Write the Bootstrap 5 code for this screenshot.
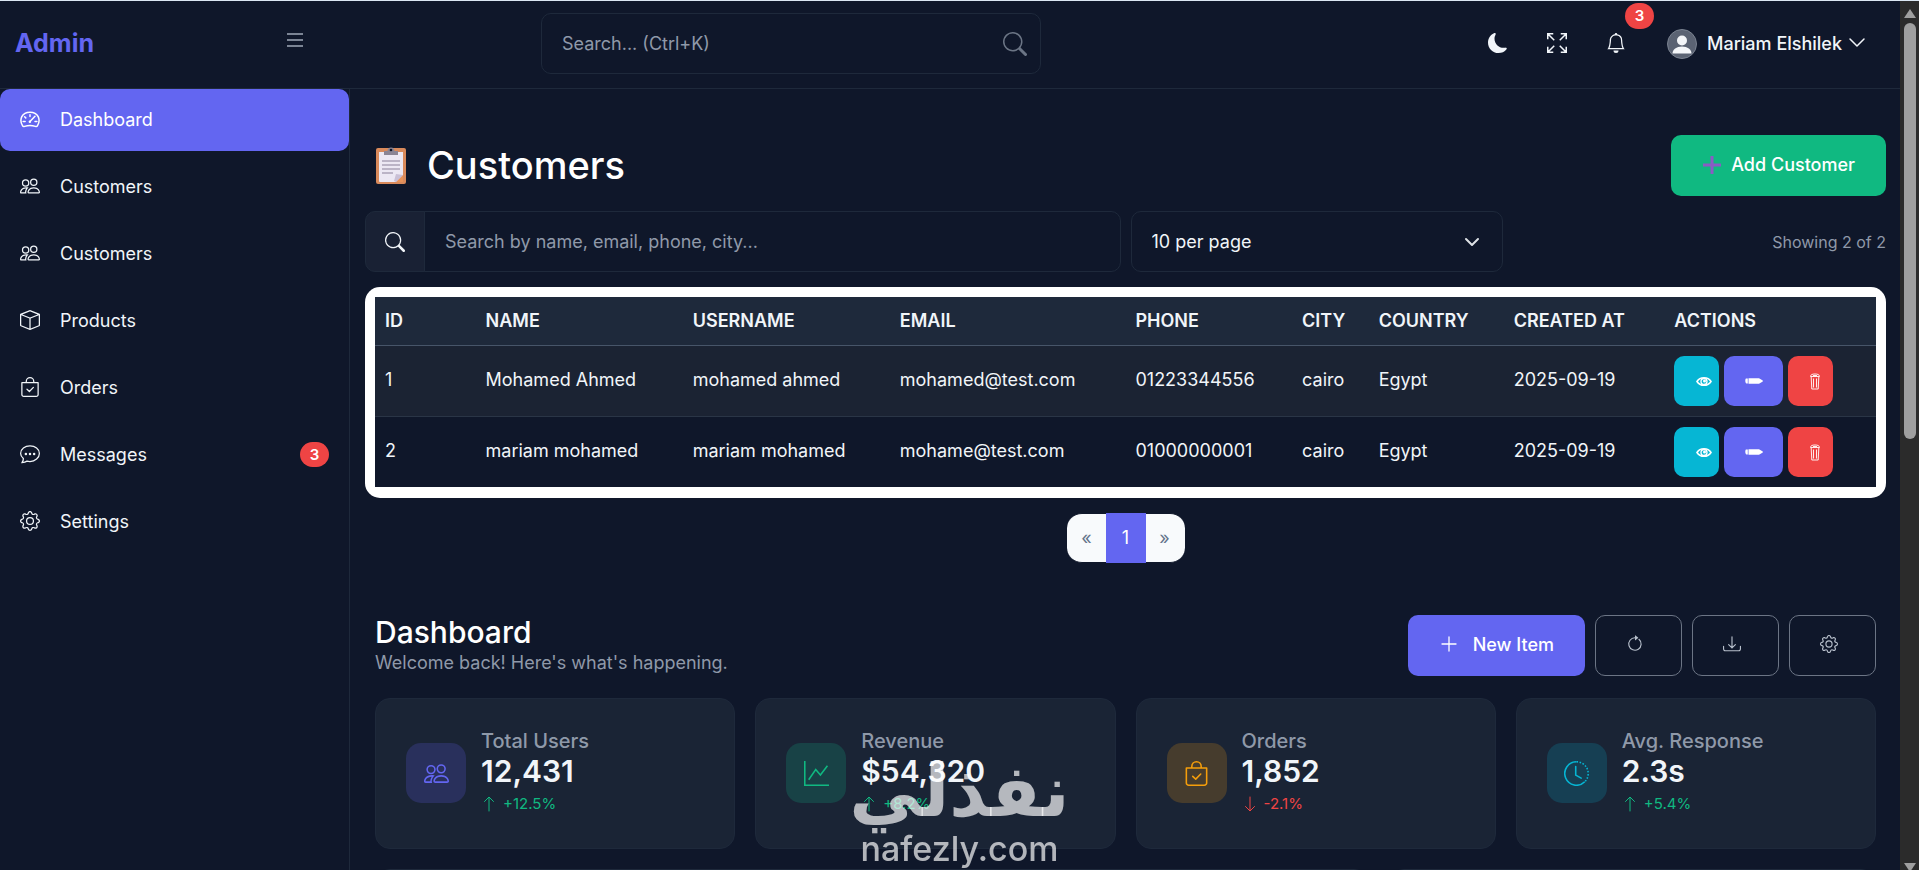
<!DOCTYPE html>
<html lang="en" data-bs-theme="dark">
<head>
<meta charset="utf-8">
<meta name="viewport" content="width=device-width, initial-scale=1">
<title>Admin</title>
<link href="https://cdn.jsdelivr.net/npm/bootstrap@5.3.0/dist/css/bootstrap.min.css" rel="stylesheet">
<style>
:root{--ink:#f1f5f9;--dim:#8f99a9;--base:#0f172a;--line:#1e293b;--indigo:#6366f1;--red:#ef4444;--green:#10b981;--cyan:#06b6d4;--amber:#f59e0b}
body{font-family:Inter,"Liberation Sans",sans-serif;font-size:18px;line-height:1.5;background:var(--base);color:var(--ink);height:100vh;overflow:hidden}
.shell{border-top:1px solid #dbe7f3;height:100vh}
.ico{width:20px;height:20px;fill:currentColor;flex:none}
.topbar{height:88px;border-bottom:1px solid var(--line);padding-bottom:2px}
.brand-zone{width:350px;padding:0 46px 0 15px}
.brand-name{font-size:25px;font-weight:700;color:var(--indigo);text-decoration:none}
.plain-btn{background:none;border:0;color:var(--ink);padding:0}
.tool-btn{width:59px;height:40px;padding-bottom:5px}
.topsearch{width:500px;margin-left:191px}
.form-control,.form-select,.input-group-text{background-color:var(--base);border:1px solid var(--line);border-radius:10px;color:var(--ink);font-size:18px;height:61px;padding:0 20px}
.form-control::placeholder{color:var(--dim);opacity:1}
.topsearch .ico{right:14px;width:24px;height:24px;color:#6b7585}
.pill{background:var(--red);border-radius:15px;font-size:15px;font-weight:600;line-height:26px;color:#fff;width:29px;text-align:center}
.pill-bell{top:-21px;left:39px}
.avatar{width:30px;height:30px}
.user-btn{font-weight:500;padding:0 33px 0 22px}
.user-name{margin:0 5px 0 10px}
.sidebar{width:350px;flex:none;border-right:1px solid var(--line)}
.sidebar .nav{gap:5px}
.sidebar .nav-link{height:62px;border-radius:10px;padding:0 20px 2px;color:var(--ink);gap:20px;display:flex;align-items:center}
.sidebar .nav-link.active{background:var(--indigo);color:#fff}
.sidebar .pill{line-height:25px}
.content-zone{padding:46px 14px 0 15px;min-width:0}
.page-title{font-size:38px;font-weight:500;line-height:1.2;gap:21px;padding-left:11px}
.page-title svg{width:30px;height:37px}
.btn-tall{height:61px;border-radius:10px;border:1px solid transparent;font-size:18px;font-weight:500;padding:0 30px 2px;color:#fff;display:flex;align-items:center}
.btn-add{background:var(--green);gap:9px}
.btn-new{background:var(--indigo);gap:14px}
.btn-line{width:87px;padding:0 8px 2px 0;justify-content:center;border-color:#6c7585;color:#b8c0cc;background:none}
.btn-line .ico{width:18px;height:18px}
.btn-row{gap:10px}
.filters{--bs-gutter-x:10px;margin-top:15px}
.input-group-text{background:#192134;width:60px;justify-content:center;padding:0}
.form-select{background-image:url("data:image/svg+xml,%3Csvg xmlns='http://www.w3.org/2000/svg' viewBox='0 0 16 16'%3E%3Cpath fill='none' stroke='%23dee2e6' stroke-linecap='round' stroke-linejoin='round' stroke-width='2' d='m2 5 6 6 6-6'/%3E%3C/svg%3E");background-size:16px 16px;background-position:right 22px center}
.note{font-size:16px;color:var(--dim)}
.table-frame{background:#fff;border-radius:15px;padding:10px 10px 11px;margin-top:15px}
.customers{table-layout:fixed;margin:0;color:var(--ink);--bs-table-bg:transparent;--bs-table-color:var(--ink);background:var(--base)}
.customers>:not(caption)>*>*{padding:10px;border:0;vertical-align:middle;background:none;box-shadow:none;white-space:nowrap}
.customers thead th{font-weight:600;text-transform:uppercase;background:#1e293b;height:48px;border-bottom:1px solid #475569;line-height:27px}
.customers tbody td{height:70px}
.customers tbody td:not(:last-child){padding-bottom:12px}
.customers tbody tr:first-child td{background:#1b2333;border-bottom:1px solid #2a3546;height:71px}
.w-id{width:6.7%}.w-name,.w-user{width:13.8%}.w-mail{width:15.7%}.w-tel{width:11.1%}.w-city{width:5.1%}.w-land{width:9%}.w-date{width:10.7%}
.act-row{gap:5px}
.act{height:50px;border:0;border-radius:10px;padding:0;color:#fff;display:inline-flex;align-items:center}
.act-view{width:45px;background:var(--cyan);padding-left:21px}
.act-edit{width:59px;background:var(--indigo);justify-content:center}
.act-del{width:45px;background:var(--red);padding-left:18px}
.act svg{width:18px;height:18px}
.pagination{margin:15px 0 0}
.page-link{width:40px;height:50px;padding:0;line-height:48px;text-align:center;font-size:18px;background:#f8fafc;border-color:var(--base);border-width:1px 0;color:#64748b}
.page-item.active .page-link{background:var(--indigo);border-color:var(--indigo);color:#fff}
.page-item:first-child .page-link{border-radius:15px 0 0 15px}
.page-item:last-child .page-link{border-radius:0 15px 15px 0}
.dash{padding:0 10px;margin-top:52px}
.dash h2{font-size:30px;font-weight:500;line-height:34px;margin:0}
.dash p{color:var(--dim);margin:0}
.stats{--bs-gutter-x:20px;--bs-gutter-y:20px;margin-top:2px}
.tile{background:#1a2435;border:1px solid #1e293b;border-radius:15px;padding:30px;gap:15px;display:flex;align-items:center;height:151px}
.tile-icon{width:60px;height:60px;border-radius:15px;display:flex;align-items:center;justify-content:center;flex:none}
.tile-icon .ico{width:25px;height:25px}
.tile-label{font-size:20px;font-weight:500;line-height:24px;color:var(--dim)}
.tile-value{font-size:30px;font-weight:600;line-height:37px}
.tile-change{font-size:15px;line-height:27px;display:flex;align-items:center;gap:6px}
.tile-change .ico{width:16px;height:16px}
.up{color:var(--green)}.down{color:var(--red)}
.t-indigo{background:#29305c;color:var(--indigo)}.t-green{background:#184246;color:var(--green)}.t-amber{background:#463c2d;color:var(--amber)}.t-cyan{background:#163f53;color:var(--cyan)}
.rail{width:19px;flex:none;background:#2b2b2b}
.rail .thumb{width:12px;height:416px;border-radius:6px;background:#9f9f9f}
.rail svg{width:14px;height:10px;fill:#9f9f9f}
.stamp{position:fixed;left:0;right:0;bottom:0;text-align:center;color:rgba(255,255,255,.68);pointer-events:none}
.stamp-ar{font-family:"DejaVu Sans",sans-serif;font-weight:700;font-size:72px;line-height:74px}
.stamp-en{font-family:Inter,sans-serif;font-weight:500;font-size:34px;line-height:42px}
</style>
</head>
<body>
<svg class="d-none" aria-hidden="true">
<symbol id="people" viewBox="0 0 16 16"><path d="M15 14s1 0 1-1-1-4-5-4-5 3-5 4 1 1 1 1h8Zm-7.978-1A.261.261 0 0 1 7 12.996c.001-.264.167-1.03.76-1.72C8.312 10.629 9.282 10 11 10c1.717 0 2.687.63 3.24 1.276.593.69.758 1.457.76 1.72l-.008.002A.274.274 0 0 1 15 13H7.022ZM11 7a2 2 0 1 0 0-4 2 2 0 0 0 0 4Zm3-2a3 3 0 1 1-6 0 3 3 0 0 1 6 0ZM6.936 9.28a5.88 5.88 0 0 0-1.23-.247A7.35 7.35 0 0 0 5 9c-4 0-5 3-5 4 0 .667.333 1 1 1h4.216A2.238 2.238 0 0 1 5 13c0-1.01.377-2.042 1.09-2.904.243-.294.526-.569.846-.816ZM4.92 10A5.493 5.493 0 0 0 4 13H1c0-.26.164-1.03.76-1.724.545-.636 1.492-1.256 3.16-1.275ZM1.5 5.5a3 3 0 1 1 6 0 3 3 0 0 1-6 0Zm3-2a2 2 0 1 0 0 4 2 2 0 0 0 0-4Z"/></symbol>
<symbol id="gauge" viewBox="0 0 16 16"><path fill="none" stroke="currentColor" stroke-width="1.200" stroke-linecap="round" d="M2.100 13.500C-1 8.500 1.500 2.500 8 2.500s9 6 5.900 11c-.4.700-1 .6-1.600.4-3-1-5.600-1-8.600 0-.6.2-1.200.3-1.600-.4zM8 4.500v1.500M3.700 6.200l.9.900M2.500 10h1.600M12 10h1.500M8 10l4-4.200"/><circle cx="7.900" cy="10.200" r="1"/></symbol>
<symbol id="box" viewBox="0 0 16 16"><path d="M8.186 1.113a.5.5 0 0 0-.372 0L1.846 3.500 8 5.961 14.154 3.500 8.186 1.113zM15 4.239l-6.500 2.600v7.922l6.500-2.600V4.240zM7.500 14.762V6.838L1 4.239v7.923l6.500 2.600zM7.443.184a1.500 1.500 0 0 1 1.114 0l7.129 2.852A.5.5 0 0 1 16 3.500v8.662a1 1 0 0 1-.629.928l-7.185 2.874a.5.5 0 0 1-.372 0L.630 13.090a1 1 0 0 1-.630-.928V3.500a.5.5 0 0 1 .314-.464L7.443.184z"/></symbol>
<symbol id="bag" viewBox="0 0 16 16"><path fill="none" stroke="currentColor" stroke-linecap="round" stroke-linejoin="round" d="M1.500 4.500h13V14a1.500 1.500 0 0 1-1.500 1.500H3A1.500 1.500 0 0 1 1.500 14zM5 4.300V3.500a3 3 0 0 1 6 0v.8M5.600 9.800l1.900 1.800 3.200-3.300"/></symbol>
<symbol id="chat" viewBox="0 0 16 16"><path fill="none" stroke="currentColor" stroke-linejoin="round" d="M2.700 11.600C1.300 10.400.5 9 .5 7.500.5 4 3.900 1.500 8 1.500S15.500 4 15.500 7.500 12.100 14 8 14c-.9 0-1.700-.1-2.400-.3-1 .7-2.300 1.100-4.100 1.300.9-1.200 1.300-2.300 1.200-3.400z"/><circle cx="4.700" cy="8" r="1"/><circle cx="8" cy="8" r="1"/><circle cx="11.300" cy="8" r="1"/></symbol>
<symbol id="gear" viewBox="0 0 16 16"><path d="M8 4.754a3.246 3.246 0 1 0 0 6.492 3.246 3.246 0 0 0 0-6.492zM5.754 8a2.246 2.246 0 1 1 4.492 0 2.246 2.246 0 0 1-4.492 0z"/><path d="M9.796 1.343c-.527-1.790-3.065-1.790-3.592 0l-.094.319a.873.873 0 0 1-1.255.52l-.292-.16c-1.640-.892-3.433.902-2.540 2.541l.159.292a.873.873 0 0 1-.52 1.255l-.319.094c-1.790.527-1.790 3.065 0 3.592l.319.094a.873.873 0 0 1 .52 1.255l-.16.292c-.892 1.640.901 3.434 2.541 2.540l.292-.159a.873.873 0 0 1 1.255.52l.094.319c.527 1.790 3.065 1.790 3.592 0l.094-.319a.873.873 0 0 1 1.255-.52l.292.16c1.640.893 3.434-.902 2.540-2.541l-.159-.292a.873.873 0 0 1 .52-1.255l.319-.094c1.790-.527 1.790-3.065 0-3.592l-.319-.094a.873.873 0 0 1-.52-1.255l.16-.292c.893-1.640-.902-3.433-2.541-2.540l-.292.159a.873.873 0 0 1-1.255-.52l-.094-.319zm-2.633.283c.246-.835 1.428-.835 1.674 0l.094.319a1.873 1.873 0 0 0 2.693 1.115l.291-.16c.764-.415 1.600.42 1.184 1.185l-.159.292a1.873 1.873 0 0 0 1.116 2.692l.318.094c.835.246.835 1.428 0 1.674l-.319.094a1.873 1.873 0 0 0-1.115 2.693l.16.291c.415.764-.42 1.600-1.185 1.184l-.291-.159a1.873 1.873 0 0 0-2.693 1.116l-.094.318c-.246.835-1.428.835-1.674 0l-.094-.319a1.873 1.873 0 0 0-2.692-1.115l-.292.16c-.764.415-1.600-.42-1.184-1.185l.159-.291A1.873 1.873 0 0 0 1.945 8.930l-.319-.094c-.835-.246-.835-1.428 0-1.674l.319-.094A1.873 1.873 0 0 0 3.060 4.377l-.16-.292c-.415-.764.42-1.600 1.185-1.184l.292.159a1.873 1.873 0 0 0 2.692-1.115l.094-.319z"/></symbol>
<symbol id="search" viewBox="0 0 16 16"><path d="M11.742 10.344a6.500 6.500 0 1 0-1.397 1.398h-.001c.03.04.062.078.098.115l3.850 3.850a1 1 0 0 0 1.415-1.414l-3.850-3.850a1.007 1.007 0 0 0-.115-.1zM12 6.500a5.500 5.500 0 1 1-11 0 5.500 5.500 0 0 1 11 0z"/></symbol>
<symbol id="arrow-up" viewBox="0 0 16 16"><path fill="none" stroke="currentColor" stroke-linecap="round" stroke-linejoin="round" d="M8 15V1.500M3.500 5.500l4.500-4.500 4.500 4.500"/></symbol>
<symbol id="arrow-down" viewBox="0 0 16 16"><path fill="none" stroke="currentColor" stroke-linecap="round" stroke-linejoin="round" d="M8 1v13.500M3.500 10.500 8 15l4.500-4.500"/></symbol>
<symbol id="eye" viewBox="0 0 18 18"><path fill="none" stroke="currentColor" stroke-width="1.600" d="M2 9.500c3-5 11-5 14 0-3 5-11 5-14 0z"/><circle cx="9" cy="9.500" r="3" fill="none" stroke="currentColor" stroke-width="1.300"/><circle cx="9.500" cy="9" r="1.500"/></symbol>
<symbol id="pencil" viewBox="0 0 18 18"><path d="M1 6.500h1.800v5H1.500C0 11 0 7 1 6.500zM3.500 6.200H14l3.800 2.300v1L14 11.800H3.500z"/></symbol>
<symbol id="bin" viewBox="0 0 18 18"><path fill="none" stroke="currentColor" stroke-width=".9" d="M4.500 4.500h9M4.500 4.500c0-2 2-2.500 4.500-2.500s4.500.5 4.500 2.500M7 3.500h4M5.200 5l.6 12h6.400l.6-12M7.500 6.500v9M10.500 6.500v9"/></symbol>
</svg>

<div class="shell d-flex">
  <div class="flex-fill d-flex flex-column overflow-hidden">
    <header class="topbar d-flex align-items-center flex-shrink-0">
      <div class="brand-zone d-flex justify-content-between align-items-center">
        <a class="brand-name" href="#">Admin</a>
        <button class="plain-btn d-flex pb-2" type="button" aria-label="Toggle menu"><svg class="ico" viewBox="0 0 20 20"><path fill="none" stroke="#7b8494" stroke-width="2" d="M3 4h16M3 10h16M3 16h16"/></svg></button>
      </div>
      <form class="topsearch position-relative d-flex align-items-center" role="search">
        <input class="form-control" type="search" placeholder="Search... (Ctrl+K)" aria-label="Search">
        <svg class="ico position-absolute"><use href="#search"/></svg>
      </form>
      <div class="ms-auto d-flex align-items-center">
        <button class="plain-btn tool-btn" type="button" aria-label="Dark mode"><svg class="ico" viewBox="0 0 16 16"><path d="M6 .278a.768.768 0 0 1 .08.858 7.208 7.208 0 0 0-.878 3.460c0 4.021 3.278 7.277 7.318 7.277.527 0 1.040-.055 1.533-.16a.787.787 0 0 1 .81.316.733.733 0 0 1-.031.893A8.349 8.349 0 0 1 8.344 16C3.734 16 0 12.286 0 7.710 0 4.266 2.114 1.312 5.124.060A.752.752 0 0 1 6 .278z"/></svg></button>
        <button class="plain-btn tool-btn" type="button" aria-label="Full screen"><svg class="ico" viewBox="0 0 16 16"><path fill="none" stroke="currentColor" stroke-width="1.200" d="M.6 5V.6H5M.8.8l5 5M11 .6h4.400V5M15.200.8l-5 5M.6 11v4.400H5M.8 15.200l5-5M15.400 11v4.400H11M15.200 15.200l-5-5"/></svg></button>
        <button class="plain-btn tool-btn position-relative" type="button" aria-label="Notifications"><svg class="ico" viewBox="0 0 16 16"><path d="M8 16a2 2 0 0 0 2-2H6a2 2 0 0 0 2 2zM8 1.918l-.797.161A4.002 4.002 0 0 0 4 6c0 .628-.134 2.197-.459 3.742-.16.767-.376 1.566-.663 2.258h10.244c-.287-.692-.502-1.490-.663-2.258C12.134 8.197 12 6.628 12 6a4.002 4.002 0 0 0-3.203-3.920L8 1.917zM14.220 12c.223.447.481.801.78 1H1c.299-.199.557-.553.780-1C2.680 10.200 3 6.880 3 6c0-2.420 1.720-4.440 4.005-4.901a1 1 0 1 1 1.990 0A5.002 5.002 0 0 1 13 6c0 .880.320 4.200 1.220 6z"/></svg><span class="pill pill-bell position-absolute">3</span></button>
        <button class="plain-btn user-btn d-flex align-items-center" type="button">
          <svg class="avatar" viewBox="0 0 30 30"><circle cx="15" cy="15" r="14.500" fill="#5b6373" stroke="#7a8290"/><circle cx="15" cy="11.500" r="5" fill="#f4f6f9"/><path fill="#f4f6f9" d="M5.500 24.500c0-4 4-7 9.500-7s9.500 3 9.500 7z"/></svg>
          <span class="user-name">Mariam Elshilek</span>
          <svg class="ico" viewBox="0 0 20 20"><path fill="none" stroke="currentColor" stroke-width="1.500" stroke-linecap="round" stroke-linejoin="round" d="m3 5 7 7 7-7"/></svg>
        </button>
      </div>
    </header>
    <div class="d-flex flex-fill overflow-hidden">
      <aside class="sidebar">
        <nav class="nav flex-column">
          <a class="nav-link active" href="#"><svg class="ico"><use href="#gauge"/></svg>Dashboard</a>
          <a class="nav-link" href="#"><svg class="ico"><use href="#people"/></svg>Customers</a>
          <a class="nav-link" href="#"><svg class="ico"><use href="#people"/></svg>Customers</a>
          <a class="nav-link" href="#"><svg class="ico"><use href="#box"/></svg>Products</a>
          <a class="nav-link" href="#"><svg class="ico"><use href="#bag"/></svg>Orders</a>
          <a class="nav-link" href="#"><svg class="ico"><use href="#chat"/></svg>Messages<span class="pill ms-auto">3</span></a>
          <a class="nav-link" href="#"><svg class="ico"><use href="#gear"/></svg>Settings</a>
        </nav>
      </aside>
      <main class="content-zone flex-fill overflow-hidden">
        <div class="d-flex justify-content-between align-items-center">
          <h1 class="page-title d-flex align-items-center m-0">
            <svg viewBox="0 0 30 37" aria-hidden="true"><rect y="1" width="30" height="36" rx="2" fill="#d98a5b"/><path fill="#ece8f3" d="M3 5h24v23l-7 7H4a1 1 0 0 1-1-1z"/><path fill="#e8935a" d="m20 35 7-7v7z"/><path fill="#c9c0d6" d="m18 34 2-7 7 1-7 7z"/><path fill="#8b8594" d="M8 8V4h3.500a3.500 3.500 0 0 1 7 0H22v4z"/><circle cx="15" cy="3" r="1.300" fill="#0f172a"/><path stroke="#aaa3b8" stroke-width="1.500" d="M6 14h18M6 18h18M6 22h18M6 26h11"/></svg>
            Customers</h1>
          <button class="btn btn-tall btn-add" type="button"><svg class="ico" viewBox="0 0 20 20"><path stroke="#8a5bc4" stroke-width="3" d="M10 1v18M1 10h18"/></svg>Add Customer</button>
        </div>
        <div class="row filters align-items-center">
          <div class="col-6">
            <div class="input-group flex-nowrap">
              <label class="input-group-text" for="find"><svg class="ico" aria-hidden="true"><use href="#search"/></svg></label>
              <input class="form-control" id="find" type="text" placeholder="Search by name, email, phone, city...">
            </div>
          </div>
          <div class="col-3"><select class="form-select" aria-label="Rows per page"><option>10 per page</option><option>25 per page</option></select></div>
          <div class="col-3 text-end note">Showing 2 of 2</div>
        </div>
        <div class="table-frame">
          <table class="table customers">
            <thead><tr><th class="w-id">ID</th><th class="w-name">Name</th><th class="w-user">Username</th><th class="w-mail">Email</th><th class="w-tel">Phone</th><th class="w-city">City</th><th class="w-land">Country</th><th class="w-date">Created At</th><th>Actions</th></tr></thead>
            <tbody>
              <tr><td>1</td><td>Mohamed Ahmed</td><td>mohamed ahmed</td><td>mohamed@test.com</td><td>01223344556</td><td>cairo</td><td>Egypt</td><td>2025-09-19</td><td><div class="d-flex act-row"><button class="act act-view" type="button" aria-label="View"><svg class="ico"><use href="#eye"/></svg></button><button class="act act-edit" type="button" aria-label="Edit"><svg class="ico"><use href="#pencil"/></svg></button><button class="act act-del" type="button" aria-label="Delete"><svg class="ico"><use href="#bin"/></svg></button></div></td></tr>
              <tr><td>2</td><td>mariam mohamed</td><td>mariam mohamed</td><td>mohame@test.com</td><td>01000000001</td><td>cairo</td><td>Egypt</td><td>2025-09-19</td><td><div class="d-flex act-row"><button class="act act-view" type="button" aria-label="View"><svg class="ico"><use href="#eye"/></svg></button><button class="act act-edit" type="button" aria-label="Edit"><svg class="ico"><use href="#pencil"/></svg></button><button class="act act-del" type="button" aria-label="Delete"><svg class="ico"><use href="#bin"/></svg></button></div></td></tr>
            </tbody>
          </table>
        </div>
        <nav aria-label="Pages">
          <ul class="pagination justify-content-center">
            <li class="page-item"><a class="page-link" href="#">«</a></li>
            <li class="page-item active"><a class="page-link" href="#">1</a></li>
            <li class="page-item"><a class="page-link" href="#">»</a></li>
          </ul>
        </nav>
        <section class="dash">
          <div class="d-flex justify-content-between align-items-center">
            <div><h2>Dashboard</h2><p>Welcome back! Here's what's happening.</p></div>
            <div class="d-flex btn-row">
              <button class="btn btn-tall btn-new" type="button"><svg class="ico" viewBox="0 0 20 20"><path stroke="currentColor" stroke-width="1.300" stroke-linecap="round" d="M10 3v14M3 10h14"/></svg>New Item</button>
              <button class="btn btn-tall btn-line" type="button" aria-label="Refresh"><svg class="ico" viewBox="0 0 16 16"><path fill="none" stroke="currentColor" stroke-linecap="round" d="M11.500 3.800A5.500 5.500 0 1 1 8 2.500"/><path d="M8 4.466V.534a.25.25 0 0 1 .41-.192l2.360 1.966c.12.1.12.284 0 .384L8.410 4.658A.25.25 0 0 1 8 4.466z"/></svg></button>
              <button class="btn btn-tall btn-line" type="button" aria-label="Download"><svg class="ico" viewBox="0 0 16 16"><path fill="none" stroke="currentColor" stroke-linecap="round" stroke-linejoin="round" d="M.5 10v2.500a1.500 1.500 0 0 0 1.500 1.500h12a1.500 1.500 0 0 0 1.500-1.500V10M8 1.500v10M5 8.500l3 3 3-3"/></svg></button>
              <button class="btn btn-tall btn-line" type="button" aria-label="Options"><svg class="ico"><use href="#gear"/></svg></button>
            </div>
          </div>
          <div class="row stats">
            <div class="col-3"><div class="tile"><div class="tile-icon t-indigo"><svg class="ico"><use href="#people"/></svg></div><div><div class="tile-label">Total Users</div><div class="tile-value">12,431</div><div class="tile-change up"><svg class="ico"><use href="#arrow-up"/></svg>+12.5%</div></div></div></div>
            <div class="col-3"><div class="tile"><div class="tile-icon t-green"><svg class="ico" viewBox="0 0 16 16"><path fill="none" stroke="currentColor" d="M.5 0v15.500H16M3 12l4.500-6.500 3 3.500L15 3"/></svg></div><div><div class="tile-label">Revenue</div><div class="tile-value">$54,320</div><div class="tile-change up"><svg class="ico"><use href="#arrow-up"/></svg>+8.2%</div></div></div></div>
            <div class="col-3"><div class="tile"><div class="tile-icon t-amber"><svg class="ico"><use href="#bag"/></svg></div><div><div class="tile-label">Orders</div><div class="tile-value">1,852</div><div class="tile-change down"><svg class="ico"><use href="#arrow-down"/></svg>-2.1%</div></div></div></div>
            <div class="col-3"><div class="tile"><div class="tile-icon t-cyan"><svg class="ico" viewBox="0 0 16 16"><g fill="none" stroke="currentColor"><path d="M8 .5a7.500 7.500 0 1 0 5.300 12.800"/><path stroke-dasharray="1 1" d="M8 .5a7.500 7.500 0 0 1 5.300 12.800"/><path stroke-linecap="round" d="M7.500 3.500V9l3.500 2"/></g></svg></div><div><div class="tile-label">Avg. Response</div><div class="tile-value">2.3s</div><div class="tile-change up"><svg class="ico"><use href="#arrow-up"/></svg>+5.4%</div></div></div></div>
            <div class="col-8"><div class="tile"></div></div>
            <div class="col-4"><div class="tile"></div></div>
          </div>
        </section>
      </main>
    </div>
  </div>
  <div class="rail d-flex flex-column align-items-center pt-1" aria-hidden="true">
    <svg class="mt-1 mb-1" viewBox="0 0 14 10"><path d="m7 0 6 9H1z"/></svg>
    <div class="thumb"></div>
    <svg class="mt-auto" viewBox="0 0 14 10"><path d="M1 3h12l-6 9z"/></svg>
  </div>
</div>
<div class="stamp"><div class="stamp-ar" lang="ar" dir="rtl">نفذلي</div><div class="stamp-en">nafezly.com</div></div>
<script src="https://cdn.jsdelivr.net/npm/bootstrap@5.3.0/dist/js/bootstrap.bundle.min.js"></script>
</body>
</html>
